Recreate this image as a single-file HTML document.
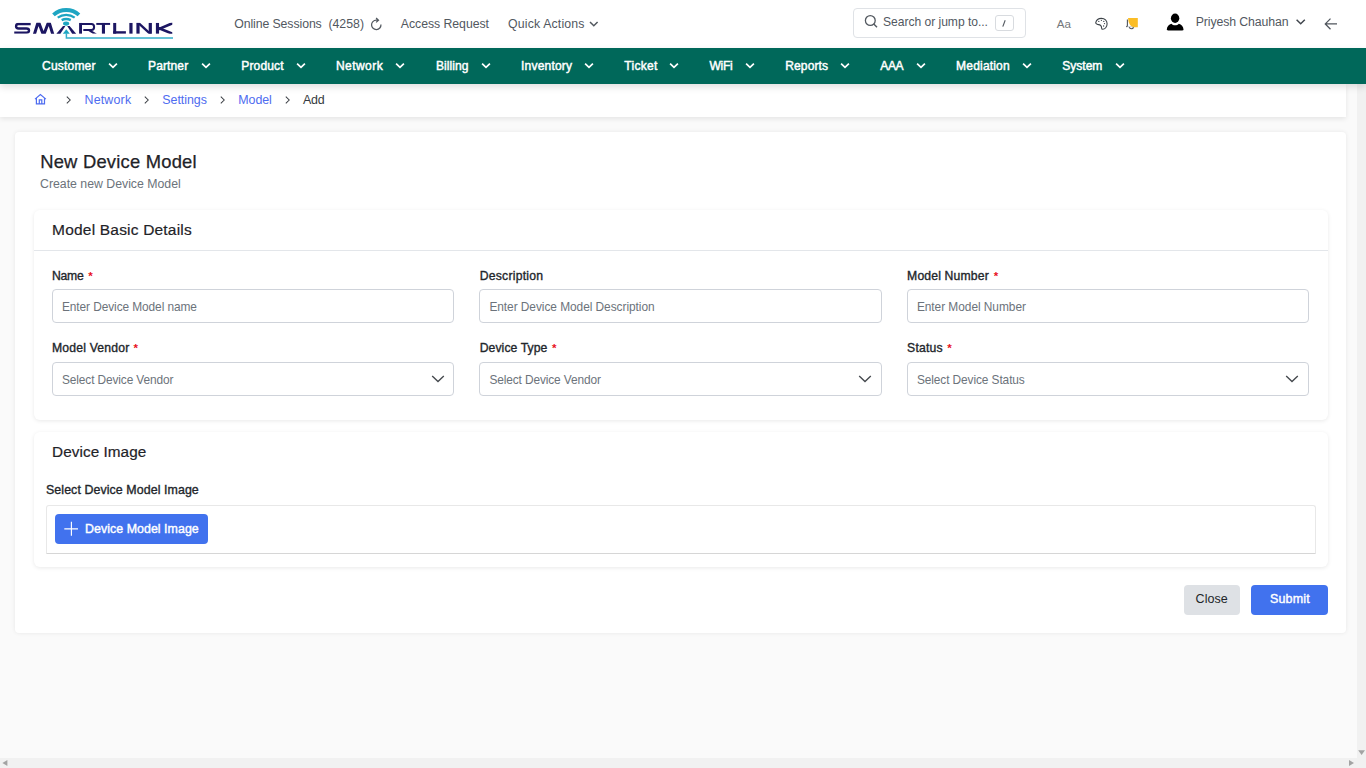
<!DOCTYPE html>
<html><head><meta charset="utf-8"><title>New Device Model</title>
<style>
html,body{margin:0;padding:0;width:1366px;height:768px;overflow:hidden;background:#fff;font-family:'Liberation Sans', sans-serif;}
.t{position:absolute;white-space:nowrap;line-height:1;}
</style></head><body>
<div style="position:absolute;left:0;top:84px;width:1357px;height:674px;background:#fafafa"></div>
<div style="position:absolute;left:1357px;top:84px;width:9px;height:684px;background:#f1f1f1"></div>
<div style="position:absolute;left:0;top:758px;width:1357px;height:10px;background:#f1f1f1"></div>
<svg style="position:absolute;left:0;top:0" width="1366" height="768"><polygon points="1358.2,750.2 1365,750.2 1361.6,755" fill="#a3a3a3"/><polygon points="1349,759.9 1349,766 1354,763" fill="#a3a3a3"/><polygon points="7.4,759.9 7.4,766 2.4,763" fill="#a3a3a3"/></svg>
<div style="position:absolute;left:0;top:84px;width:1346px;height:32.7px;background:#fff;box-shadow:0 2px 5px rgba(0,0,0,0.085)"></div>
<div style="position:absolute;left:15px;top:132.3px;width:1331px;height:500.5px;background:#fff;border-radius:4px;box-shadow:0 0 4px rgba(0,0,0,0.08)"></div>
<div style="position:absolute;left:33.5px;top:209.5px;width:1294.3px;height:210.5px;background:#fff;border-radius:6px;box-shadow:0 1px 4px rgba(0,0,0,0.09)"></div>
<div style="position:absolute;left:33.5px;top:250px;width:1294.3px;height:1px;background:#e3e6ea"></div>
<div style="position:absolute;left:33.5px;top:431.6px;width:1294.3px;height:135px;background:#fff;border-radius:6px;box-shadow:0 1px 4px rgba(0,0,0,0.09)"></div>
<div style="position:absolute;left:0;top:0;width:1366px;height:48px;background:#fff"></div>
<div style="position:absolute;left:0;top:48px;width:1366px;height:36px;background:#00685a;box-shadow:0 3px 7px rgba(0,0,0,0.13)"></div>
<svg style="position:absolute;left:0;top:0" width="180" height="48" viewBox="0 0 180 48">
<path d="M52.15,13.39 A21,21 0 0 1 80.25,13.39 L77.64,16.29 A17.1,17.1 0 0 0 54.76,16.29 Z M57.05,16.86 A15.2,15.2 0 0 1 75.35,16.86 L74.02,18.62 A13.0,13.0 0 0 0 58.38,18.62 Z M61.12,19.02 A11.2,11.2 0 0 1 71.28,19.02 L70.20,21.16 A8.8,8.8 0 0 0 62.20,21.16 Z" fill="#1ea5c2"/>
<polyline points="66.4,33.6 66.4,37.9 173,37.9" fill="none" stroke="#34afca" stroke-width="1.5"/>
<ellipse cx="66.1" cy="23.6" rx="3.1" ry="2.05" fill="#1ea5c2"/>
<polygon points="62.8,33.75 69.8,33.75 66.3,29.3" fill="#1ea5c2"/>
<polygon points="56.4,33.75 60.4,33.75 65.4,26.1 63.0,26.1" fill="#1c1662"/>
<polygon points="76.2,33.75 72.2,33.75 67.2,26.1 69.6,26.1" fill="#1c1662"/>
<defs><clipPath id="lc"><rect x="0" y="22.85" width="180" height="10.95"/></clipPath></defs>
<g clip-path="url(#lc)">
<path d="M30.7,23.95 H18.6 C15.2,23.95 15.2,28.45 18.6,28.45 H26.4 C29.9,28.45 29.9,32.6 26.4,32.6 H14.25" fill="none" stroke="#1c1662" stroke-width="2.35"/>
<polyline points="34.0,35.6 38.35,21.4 43.55,35.3 48.85,21.4 53.2,35.6" fill="none" stroke="#1c1662" stroke-width="3.0" stroke-linejoin="miter" stroke-miterlimit="10"/>
<rect x="79.1" y="22.85" width="2.9" height="11" fill="#1c1662"/>
<path d="M80.5,23.9 H91.4 C95.0,23.9 95.0,29.95 91.4,29.95 H83.3" fill="none" stroke="#1c1662" stroke-width="2.05"/>
<polygon points="87.3,30.2 91.1,30.2 96.9,33.8 92.9,33.8" fill="#1c1662"/>
<rect x="96.3" y="22.85" width="13.8" height="2.05" fill="#1c1662"/>
<rect x="101.9" y="22.85" width="3.1" height="11" fill="#1c1662"/>
<rect x="113.2" y="22.85" width="3.0" height="11" fill="#1c1662"/>
<rect x="113.2" y="31.2" width="12.7" height="2.6" fill="#1c1662"/>
<rect x="129.35" y="22.85" width="3.2" height="11" fill="#1c1662"/>
<rect x="136.4" y="22.85" width="3.2" height="11" fill="#1c1662"/>
<rect x="148.7" y="22.85" width="3.2" height="11" fill="#1c1662"/>
<polygon points="136.4,22.85 139.9,22.85 151.9,33.8 148.4,33.8" fill="#1c1662"/>
<rect x="155.9" y="22.85" width="3.15" height="11" fill="#1c1662"/>
</g>
<clipPath id="kc"><rect x="158" y="22.85" width="14.3" height="10.95"/></clipPath>
<g clip-path="url(#kc)" stroke="#1c1662" stroke-width="2.7" fill="none">
<line x1="158.2" y1="29.3" x2="174" y2="22.6"/>
<line x1="158.2" y1="27.9" x2="174" y2="34.3"/>
</g>
</svg>
<div class="t" style="left:234.20px;top:17.99px;font-size:12.3px;color:#52585f;font-weight:400;letter-spacing:-0.091px;">Online Sessions</div>
<div class="t" style="left:328.40px;top:17.99px;font-size:12.3px;color:#52585f;font-weight:400;letter-spacing:0.011px;">(4258)</div>
<svg style="position:absolute;left:368px;top:16px" width="16" height="16" viewBox="0 0 16 16">
<path d="M12.95,8.5 A4.7,4.7 0 1 1 8.27,4.17 H10.4 M8.1,2.0 L10.5,4.17 L8.1,6.4" fill="none" stroke="#52585f" stroke-width="1.25"/>
</svg>
<div class="t" style="left:400.80px;top:17.99px;font-size:12.3px;color:#52585f;font-weight:400;letter-spacing:-0.051px;">Access Request</div>
<div class="t" style="left:508.00px;top:17.99px;font-size:12.3px;color:#52585f;font-weight:400;letter-spacing:0.164px;">Quick Actions</div>
<svg style="position:absolute;left:588px;top:18.5px" width="12" height="10" viewBox="0 0 12 10"><path d="M2,3 L5.8,6.8 L9.6,3" fill="none" stroke="#52585f" stroke-width="1.5"/></svg>
<div style="position:absolute;left:852.5px;top:8.3px;width:171px;height:27.5px;border:1px solid #dfe2e6;border-radius:4px;background:#fff"></div>
<svg style="position:absolute;left:863px;top:13px" width="16" height="16" viewBox="0 0 16 16">
<circle cx="7.3" cy="7.5" r="4.9" fill="none" stroke="#52585f" stroke-width="1.3"/>
<path d="M10.8,11 L14,14.2" stroke="#52585f" stroke-width="1.4"/></svg>
<div class="t" style="left:883.00px;top:15.96px;font-size:12.1px;color:#52585f;font-weight:400;letter-spacing:-0.030px;">Search or jump to...</div>
<div style="position:absolute;left:994.5px;top:15.2px;width:17px;height:13.5px;border:1px solid #d8dbdf;border-radius:3px"></div>
<svg style="position:absolute;left:995px;top:16px" width="18" height="14" viewBox="0 0 18 14"><path d="M10.2,4.2 L7.8,10.6" stroke="#52585f" stroke-width="1.1"/></svg>
<div class="t" style="left:1056.80px;top:18.38px;font-size:11.6px;color:#74777b;font-weight:400;">Aa</div>
<svg style="position:absolute;left:1093px;top:16px" width="17" height="16" viewBox="0 0 17 16">
<path d="M2.7,6.9 C3.4,3.6 6,2.4 8.4,2.4 C11.8,2.4 14.1,4.8 14.1,7.8 C14.1,11 11.9,13.3 9.7,13.3 C8.9,13.3 8.6,12.7 8.6,12 C8.6,10.8 8.3,9.8 7.4,9.2 C6.4,8.6 5.1,8.7 4.2,8.2 C3.3,7.8 2.6,7.5 2.7,6.9 Z" fill="none" stroke="#3d4349" stroke-width="1.1" stroke-linejoin="round"/>
<circle cx="5.8" cy="5.4" r="0.65" fill="#3d4349"/><circle cx="8.4" cy="4.3" r="0.65" fill="#3d4349"/>
<circle cx="10.8" cy="5.4" r="0.65" fill="#3d4349"/><circle cx="11.5" cy="7.6" r="0.65" fill="#3d4349"/><circle cx="10.6" cy="10" r="0.65" fill="#3d4349"/>
</svg>
<svg style="position:absolute;left:1124px;top:16px" width="16" height="16" viewBox="0 0 16 16">
<path d="M2,10.7 H10.6" stroke="#c9cdd2" stroke-width="1"/>
<path d="M3.4,3.4 V9.6 C3.4,10.2 3,10.6 2.2,10.7" fill="none" stroke="#4f555c" stroke-width="1.1"/>
<path d="M5.2,11.2 C5.8,13.2 8.9,13.2 9.6,11.2" fill="none" stroke="#4f555c" stroke-width="1.1"/>
<path d="M4,1.9 H13.8 V11.2 H10.3 Q4.6,10.5 4,1.9 Z" fill="#fbbd26"/>
</svg>
<svg style="position:absolute;left:1165px;top:12px" width="20" height="20" viewBox="0 0 20 20">
<ellipse cx="10.1" cy="6.2" rx="4.2" ry="4.7" fill="#000"/>
<path d="M1.8,17.6 C1.8,14.5 4,12.6 6.5,11.7 C7.4,12.8 8.6,13.3 10.1,13.3 C11.6,13.3 12.9,12.8 13.8,11.7 C16.3,12.6 18.5,14.5 18.5,17.6 C18.5,18.3 18,18.4 17.4,18.4 H2.9 C2.3,18.4 1.8,18.3 1.8,17.6 Z" fill="#000"/>
</svg>
<div class="t" style="left:1195.70px;top:15.79px;font-size:12.3px;color:#52585f;font-weight:400;letter-spacing:-0.103px;">Priyesh Chauhan</div>
<svg style="position:absolute;left:1294px;top:16px" width="14" height="10" viewBox="0 0 14 10"><path d="M2.6,3.8 L6.7,7.8 L10.8,3.8" fill="none" stroke="#40464d" stroke-width="1.5"/></svg>
<svg style="position:absolute;left:1322px;top:15px" width="18" height="18" viewBox="0 0 18 18"><path d="M15,8.9 H3.6 M8.5,3.6 L3.3,8.9 L8.5,14.2" fill="none" stroke="#50565d" stroke-width="1.3"/></svg>
<div class="t" style="left:42.10px;top:60.00px;font-size:12.05px;color:#ffffff;font-weight:400;letter-spacing:0.166px;-webkit-text-stroke:0.45px #fff">Customer</div>
<svg style="position:absolute;left:107.0px;top:60px" width="13" height="11" viewBox="0 0 13 11"><path d="M2.1,3.7 L6.0,7.4 L9.9,3.7" fill="none" stroke="#fff" stroke-width="1.75"/></svg>
<div class="t" style="left:148.00px;top:60.00px;font-size:12.05px;color:#ffffff;font-weight:400;letter-spacing:0.113px;-webkit-text-stroke:0.45px #fff">Partner</div>
<svg style="position:absolute;left:200.4px;top:60px" width="13" height="11" viewBox="0 0 13 11"><path d="M2.1,3.7 L6.0,7.4 L9.9,3.7" fill="none" stroke="#fff" stroke-width="1.75"/></svg>
<div class="t" style="left:241.30px;top:60.00px;font-size:12.05px;color:#ffffff;font-weight:400;letter-spacing:0.131px;-webkit-text-stroke:0.45px #fff">Product</div>
<svg style="position:absolute;left:294.8px;top:60px" width="13" height="11" viewBox="0 0 13 11"><path d="M2.1,3.7 L6.0,7.4 L9.9,3.7" fill="none" stroke="#fff" stroke-width="1.75"/></svg>
<div class="t" style="left:336.00px;top:60.00px;font-size:12.05px;color:#ffffff;font-weight:400;letter-spacing:0.419px;-webkit-text-stroke:0.45px #fff">Network</div>
<svg style="position:absolute;left:394.4px;top:60px" width="13" height="11" viewBox="0 0 13 11"><path d="M2.1,3.7 L6.0,7.4 L9.9,3.7" fill="none" stroke="#fff" stroke-width="1.75"/></svg>
<div class="t" style="left:436.00px;top:60.00px;font-size:12.05px;color:#ffffff;font-weight:400;letter-spacing:0.054px;-webkit-text-stroke:0.45px #fff">Billing</div>
<svg style="position:absolute;left:480.0px;top:60px" width="13" height="11" viewBox="0 0 13 11"><path d="M2.1,3.7 L6.0,7.4 L9.9,3.7" fill="none" stroke="#fff" stroke-width="1.75"/></svg>
<div class="t" style="left:521.10px;top:60.00px;font-size:12.05px;color:#ffffff;font-weight:400;letter-spacing:0.177px;-webkit-text-stroke:0.45px #fff">Inventory</div>
<svg style="position:absolute;left:583.3px;top:60px" width="13" height="11" viewBox="0 0 13 11"><path d="M2.1,3.7 L6.0,7.4 L9.9,3.7" fill="none" stroke="#fff" stroke-width="1.75"/></svg>
<div class="t" style="left:624.20px;top:60.00px;font-size:12.05px;color:#ffffff;font-weight:400;letter-spacing:0.302px;-webkit-text-stroke:0.45px #fff">Ticket</div>
<svg style="position:absolute;left:668.3px;top:60px" width="13" height="11" viewBox="0 0 13 11"><path d="M2.1,3.7 L6.0,7.4 L9.9,3.7" fill="none" stroke="#fff" stroke-width="1.75"/></svg>
<div class="t" style="left:709.40px;top:60.00px;font-size:12.05px;color:#ffffff;font-weight:400;letter-spacing:-0.233px;-webkit-text-stroke:0.45px #fff">WiFi</div>
<svg style="position:absolute;left:744.1px;top:60px" width="13" height="11" viewBox="0 0 13 11"><path d="M2.1,3.7 L6.0,7.4 L9.9,3.7" fill="none" stroke="#fff" stroke-width="1.75"/></svg>
<div class="t" style="left:785.20px;top:60.00px;font-size:12.05px;color:#ffffff;font-weight:400;letter-spacing:0.121px;-webkit-text-stroke:0.45px #fff">Reports</div>
<svg style="position:absolute;left:839.2px;top:60px" width="13" height="11" viewBox="0 0 13 11"><path d="M2.1,3.7 L6.0,7.4 L9.9,3.7" fill="none" stroke="#fff" stroke-width="1.75"/></svg>
<div class="t" style="left:880.30px;top:60.00px;font-size:12.05px;color:#ffffff;font-weight:400;letter-spacing:-0.430px;-webkit-text-stroke:0.45px #fff">AAA</div>
<svg style="position:absolute;left:914.6px;top:60px" width="13" height="11" viewBox="0 0 13 11"><path d="M2.1,3.7 L6.0,7.4 L9.9,3.7" fill="none" stroke="#fff" stroke-width="1.75"/></svg>
<div class="t" style="left:956.10px;top:60.00px;font-size:12.05px;color:#ffffff;font-weight:400;letter-spacing:0.170px;-webkit-text-stroke:0.45px #fff">Mediation</div>
<svg style="position:absolute;left:1021.0px;top:60px" width="13" height="11" viewBox="0 0 13 11"><path d="M2.1,3.7 L6.0,7.4 L9.9,3.7" fill="none" stroke="#fff" stroke-width="1.75"/></svg>
<div class="t" style="left:1062.20px;top:60.00px;font-size:12.05px;color:#ffffff;font-weight:400;letter-spacing:0.003px;-webkit-text-stroke:0.45px #fff">System</div>
<svg style="position:absolute;left:1114.0px;top:60px" width="13" height="11" viewBox="0 0 13 11"><path d="M2.1,3.7 L6.0,7.4 L9.9,3.7" fill="none" stroke="#fff" stroke-width="1.75"/></svg>
<svg style="position:absolute;left:32px;top:92px" width="17" height="15" viewBox="0 0 17 15">
<path d="M3,7.1 L8.4,2.6 L13.9,7.1 M4.4,6 V11.9 H12.5 V6 M7.3,11.9 V7.9 H9.8 V11.9" fill="none" stroke="#4e6cf0" stroke-width="1.2" stroke-linejoin="miter"/></svg>
<svg style="position:absolute;left:63.9px;top:94px" width="10" height="12" viewBox="0 0 10 12"><path d="M2.8,2.6 L6.2,6 L2.8,9.4" fill="none" stroke="#3b3f44" stroke-width="1.05"/></svg>
<svg style="position:absolute;left:142.0px;top:94px" width="10" height="12" viewBox="0 0 10 12"><path d="M2.8,2.6 L6.2,6 L2.8,9.4" fill="none" stroke="#3b3f44" stroke-width="1.05"/></svg>
<svg style="position:absolute;left:218.0px;top:94px" width="10" height="12" viewBox="0 0 10 12"><path d="M2.8,2.6 L6.2,6 L2.8,9.4" fill="none" stroke="#3b3f44" stroke-width="1.05"/></svg>
<svg style="position:absolute;left:282.7px;top:94px" width="10" height="12" viewBox="0 0 10 12"><path d="M2.8,2.6 L6.2,6 L2.8,9.4" fill="none" stroke="#3b3f44" stroke-width="1.05"/></svg>
<div class="t" style="left:84.50px;top:93.90px;font-size:12.4px;color:#4e6cf0;font-weight:400;letter-spacing:0.188px;">Network</div>
<div class="t" style="left:162.30px;top:93.90px;font-size:12.4px;color:#4e6cf0;font-weight:400;letter-spacing:-0.018px;">Settings</div>
<div class="t" style="left:238.30px;top:93.90px;font-size:12.4px;color:#4e6cf0;font-weight:400;letter-spacing:-0.047px;">Model</div>
<div class="t" style="left:303.00px;top:93.90px;font-size:12.4px;color:#343a40;font-weight:400;letter-spacing:-0.236px;">Add</div>
<div class="t" style="left:40.20px;top:152.62px;font-size:18.4px;color:#1f2328;font-weight:400;letter-spacing:0.209px;-webkit-text-stroke:0.25px #1f2328">New Device Model</div>
<div class="t" style="left:40.00px;top:177.99px;font-size:12.3px;color:#6c737b;font-weight:400;letter-spacing:-0.002px;">Create new Device Model</div>
<div class="t" style="left:52.10px;top:222.08px;font-size:15.5px;color:#1f2328;font-weight:400;letter-spacing:0.195px;-webkit-text-stroke:0.2px #1f2328">Model Basic Details</div>
<div class="t" style="left:52.00px;top:269.67px;font-size:12.2px;color:#22262b;font-weight:400;letter-spacing:-0.241px;-webkit-text-stroke:0.35px #22262b">Name</div>
<div class="t" style="left:52.00px;top:341.87px;font-size:12.2px;color:#22262b;font-weight:400;letter-spacing:0.180px;-webkit-text-stroke:0.35px #22262b">Model Vendor</div>
<div style="position:absolute;left:52px;top:289.2px;width:400.4px;height:31.8px;border:1px solid #cfd3da;border-radius:4px;background:#fff"></div>
<div style="position:absolute;left:52px;top:362.2px;width:400.4px;height:32.2px;border:1px solid #cfd3da;border-radius:4px;background:#fff"></div>
<div class="t" style="left:62.00px;top:302.03px;font-size:11.9px;color:#6c737b;font-weight:400;letter-spacing:-0.087px;">Enter Device Model name</div>
<div class="t" style="left:62.00px;top:374.93px;font-size:11.9px;color:#6c737b;font-weight:400;letter-spacing:-0.119px;">Select Device Vendor</div>
<svg style="position:absolute;left:429.7px;top:372px" width="16" height="12" viewBox="0 0 16 12"><path d="M2.2,3.9 L8,9.6 L13.8,3.9" fill="none" stroke="#45494e" stroke-width="1.35"/></svg>
<div class="t" style="left:479.70px;top:269.67px;font-size:12.2px;color:#22262b;font-weight:400;letter-spacing:0.245px;-webkit-text-stroke:0.35px #22262b">Description</div>
<div class="t" style="left:479.70px;top:341.87px;font-size:12.2px;color:#22262b;font-weight:400;letter-spacing:0.083px;-webkit-text-stroke:0.35px #22262b">Device Type</div>
<div style="position:absolute;left:479.4px;top:289.2px;width:400.4px;height:31.8px;border:1px solid #cfd3da;border-radius:4px;background:#fff"></div>
<div style="position:absolute;left:479.4px;top:362.2px;width:400.4px;height:32.2px;border:1px solid #cfd3da;border-radius:4px;background:#fff"></div>
<div class="t" style="left:489.40px;top:302.03px;font-size:11.9px;color:#6c737b;font-weight:400;letter-spacing:-0.047px;">Enter Device Model Description</div>
<div class="t" style="left:489.40px;top:374.93px;font-size:11.9px;color:#6c737b;font-weight:400;letter-spacing:-0.114px;">Select Device Vendor</div>
<svg style="position:absolute;left:857.1px;top:372px" width="16" height="12" viewBox="0 0 16 12"><path d="M2.2,3.9 L8,9.6 L13.8,3.9" fill="none" stroke="#45494e" stroke-width="1.35"/></svg>
<div class="t" style="left:907.10px;top:269.67px;font-size:12.2px;color:#22262b;font-weight:400;letter-spacing:0.156px;-webkit-text-stroke:0.35px #22262b">Model Number</div>
<div class="t" style="left:907.10px;top:341.87px;font-size:12.2px;color:#22262b;font-weight:400;letter-spacing:0.213px;-webkit-text-stroke:0.35px #22262b">Status</div>
<div style="position:absolute;left:906.6px;top:289.2px;width:400.4px;height:31.8px;border:1px solid #cfd3da;border-radius:4px;background:#fff"></div>
<div style="position:absolute;left:906.6px;top:362.2px;width:400.4px;height:32.2px;border:1px solid #cfd3da;border-radius:4px;background:#fff"></div>
<div class="t" style="left:916.90px;top:302.03px;font-size:11.9px;color:#6c737b;font-weight:400;letter-spacing:-0.040px;">Enter Model Number</div>
<div class="t" style="left:916.90px;top:374.93px;font-size:11.9px;color:#6c737b;font-weight:400;letter-spacing:-0.094px;">Select Device Status</div>
<svg style="position:absolute;left:1284.3px;top:372px" width="16" height="12" viewBox="0 0 16 12"><path d="M2.2,3.9 L8,9.6 L13.8,3.9" fill="none" stroke="#45494e" stroke-width="1.35"/></svg>
<div class="t" style="left:88.20px;top:271.17px;font-size:11.5px;color:#e8121e;font-weight:700;">*</div>
<div class="t" style="left:993.80px;top:271.27px;font-size:11.5px;color:#e8121e;font-weight:700;">*</div>
<div class="t" style="left:133.60px;top:343.17px;font-size:11.5px;color:#e8121e;font-weight:700;">*</div>
<div class="t" style="left:551.90px;top:343.27px;font-size:11.5px;color:#e8121e;font-weight:700;">*</div>
<div class="t" style="left:947.30px;top:343.27px;font-size:11.5px;color:#e8121e;font-weight:700;">*</div>
<div class="t" style="left:52.10px;top:443.85px;font-size:15.3px;color:#1f2328;font-weight:400;letter-spacing:0.058px;-webkit-text-stroke:0.2px #1f2328">Device Image</div>
<div class="t" style="left:46.00px;top:483.50px;font-size:12.4px;color:#22262b;font-weight:400;letter-spacing:0.080px;-webkit-text-stroke:0.35px #22262b">Select Device Model Image</div>
<div style="position:absolute;left:46px;top:504.8px;width:1267.6px;height:47.6px;border:1px solid #e8e8e8;border-bottom-color:#d6d6d6;border-radius:3px 3px 1px 1px;background:#fff"></div>
<div style="position:absolute;left:55.3px;top:514.3px;width:152.7px;height:29.7px;background:#4172ee;border-radius:4px"></div>
<svg style="position:absolute;left:62px;top:520px" width="18" height="18" viewBox="0 0 18 18"><path d="M9.4,1.8 V15.7 M2.3,8.8 H16" stroke="#fff" stroke-width="1.15"/></svg>
<div class="t" style="left:85.00px;top:523.00px;font-size:12.4px;color:#ffffff;font-weight:400;letter-spacing:0.046px;-webkit-text-stroke:0.4px #fff">Device Model Image</div>
<div style="position:absolute;left:1184.1px;top:585.1px;width:55.7px;height:29.6px;background:#dee1e5;border-radius:4px"></div>
<div class="t" style="left:1195.60px;top:593.22px;font-size:12.5px;color:#212529;font-weight:400;letter-spacing:0.041px;">Close</div>
<div style="position:absolute;left:1251.3px;top:585px;width:76.3px;height:29.6px;background:#4172ee;border-radius:4px"></div>
<div class="t" style="left:1270.00px;top:593.22px;font-size:12.5px;color:#ffffff;font-weight:400;letter-spacing:0.145px;-webkit-text-stroke:0.4px #fff">Submit</div>
</body></html>
